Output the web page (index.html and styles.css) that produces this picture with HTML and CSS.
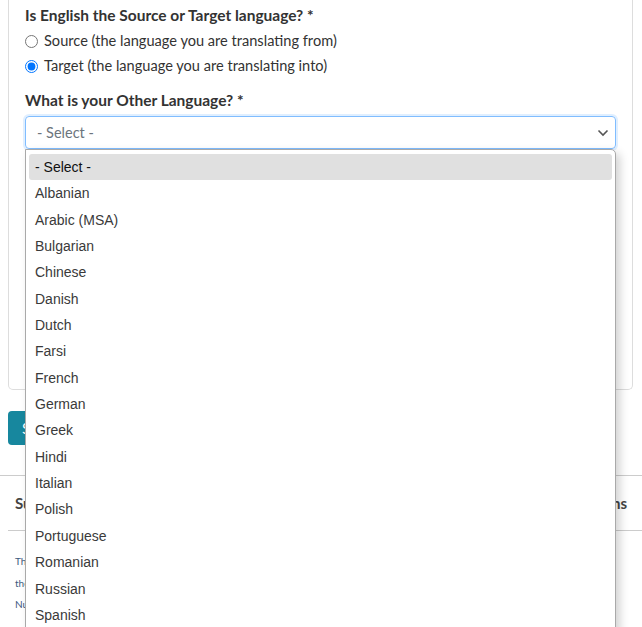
FILE: index.html
```html
<!DOCTYPE html>
<html lang="en">
<head>
    <meta charset="UTF-8">
    <title>Translator Application</title>
    <link rel="stylesheet" href="styles.css">
</head>
<body>

<div class="page">
    <div class="card">
        <div class="question">
            <p class="label">Is English the Source or Target language? *</p>
            <label class="choice"><input type="radio" name="dir"> Source (the language you are translating from)</label>
            <label class="choice"><input type="radio" name="dir" checked> Target (the language you are translating into)</label>
        </div>

        <div class="question">
            <p class="label">What is your Other Language? *</p>
            <div class="select-wrap">
                <div class="select-box">
                    <span>- Select -</span>
                    <svg class="chevron" width="12" height="8" viewBox="0 0 12 8">
                        <polyline points="1.5,1.5 6,6 10.5,1.5" fill="none" stroke="#555" stroke-width="1.6"/>
                    </svg>
                </div>

                <!-- open select popup -->
                <ul class="popup">
                    <li class="active">- Select -</li>
                    <li>Albanian</li>
                    <li>Arabic (MSA)</li>
                    <li>Bulgarian</li>
                    <li>Chinese</li>
                    <li>Danish</li>
                    <li>Dutch</li>
                    <li>Farsi</li>
                    <li>French</li>
                    <li>German</li>
                    <li>Greek</li>
                    <li>Hindi</li>
                    <li>Italian</li>
                    <li>Polish</li>
                    <li>Portuguese</li>
                    <li>Romanian</li>
                    <li>Russian</li>
                    <li>Spanish</li>
                </ul>
            </div>
        </div>

        <div class="question">
            <p class="label">Do you have a translation degree? *</p>
            <label class="choice"><input type="radio" name="deg"> Yes</label>
            <label class="choice"><input type="radio" name="deg"> No</label>
        </div>

        <div class="question">
            <label class="choice"><input type="checkbox" checked> I am a native speaker</label>
        </div>

        <div class="question">
            <label class="choice"><input type="checkbox" checked> I agree to the terms</label>
        </div>
    </div>

    <button class="submit">Submit</button>
</div>

<div class="footer">
    <div class="footer-head">
        <span>Support</span>
        <span>Terms and Conditions</span>
    </div>
    <div class="footer-text">
        <p>The information on this page is provided for translators applying to</p>
        <p>the programme. Please answer every question marked with a star.</p>
        <p>Numbers and dates are checked before your application is reviewed.</p>
    </div>
</div>

</body>
</html>
```

FILE: styles.css
```css
body {
    margin: 0;
    font-family: "Lato", "Open Sans", sans-serif;
    color: #333;
    background-color: #fff;
}

.page {
    padding: 0 9px 30px 8px;
}

.card {
    border: 1px solid #ddd;
    border-top: none;
    border-radius: 0 0 5px 5px;
    padding: 5px 16px 10px 16px;
    height: 374px;
    overflow: visible;
}

.question {
    margin-bottom: 14px;
}

.label {
    font-weight: bold;
    font-size: 15.5px;
    margin: 0 0 6px 0;
    line-height: 20px;
}

.choice {
    display: flex;
    align-items: center;
    gap: 6px;
    font-size: 14.6px;
    line-height: 20px;
    margin-bottom: 5px;
}

.choice input {
    margin: 0;
    width: 13px;
    height: 13px;
    accent-color: #0075ff;
}

/* 下拉框 */
.select-wrap {
    position: relative;
}

.select-box {
    display: flex;
    align-items: center;
    justify-content: space-between;
    height: 31px;
    padding: 0 6px 0 11px;
    border: 1px solid #80bdff;
    border-radius: 4px;
    box-shadow: 0 0 0 2px rgba(0, 123, 255, 0.12);
    font-size: 14.5px;
    color: #6c757d;
}

.popup {
    position: absolute;
    top: 33px;
    left: 0;
    right: 0;
    margin: 0;
    padding: 4px 3px;
    list-style: none;
    background-color: #fff;
    border: 1px solid #a9a9a9;
    border-radius: 0 5px 5px 5px;
    box-shadow: 4px 4px 10px rgba(0, 0, 0, 0.18);
    font-family: "Liberation Sans", Arial, sans-serif;
    font-size: 14px;
    color: #3a3a3a;
    z-index: 10;
}

.popup li {
    height: 26.35px;
    line-height: 26.35px;
    padding-left: 6px;
}

.popup li.active {
    background-color: #e0e0e0;
    border-radius: 3px;
    color: #111;
}

.submit {
    margin-top: 21px;
    background-color: #17879e;
    color: white;
    border: none;
    border-radius: 4px;
    font-family: "Lato", sans-serif;
    font-size: 15px;
    padding: 8px 14px;
    height: 34px;
}

.footer {
    border-top: 1px solid #ccc;
}

.footer-head {
    display: flex;
    justify-content: space-between;
    height: 54px;
    align-items: center;
    font-weight: bold;
    font-size: 15px;
    color: #444;
    border-bottom: 1px solid #ccc;
    margin: 0 0 0 8px;
    padding: 0 15px 0 7px;
}

.footer-text {
    padding: 20px 15px;
    font-size: 10px;
    color: #3d5a80;
}

.footer-text p {
    margin: 0;
    line-height: 21.5px;
}
```
